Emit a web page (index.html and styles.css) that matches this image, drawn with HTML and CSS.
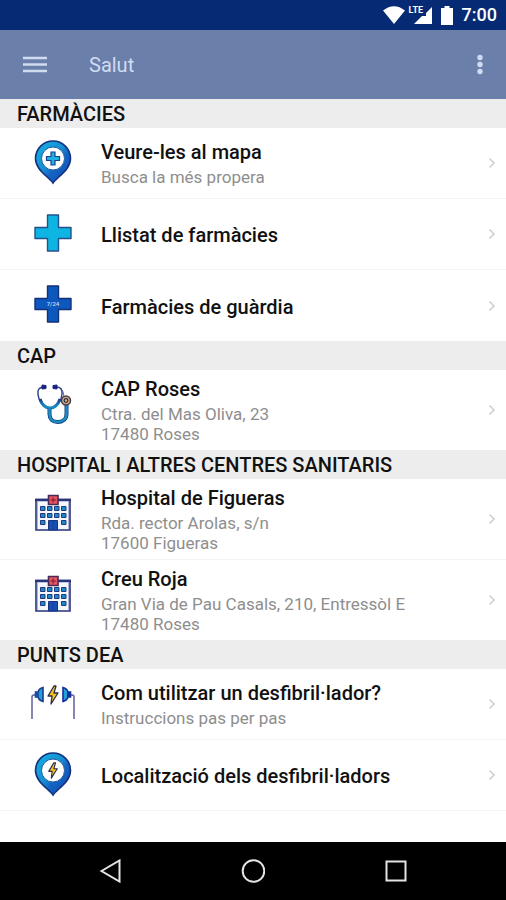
FILE: index.html
```html
<!DOCTYPE html>
<html lang="ca">
<head>
<meta charset="utf-8">
<meta name="viewport" content="width=device-width, initial-scale=1">
<title>Salut</title>
<link rel="stylesheet" href="styles.css">
</head>
<body>
<svg class="defs" aria-hidden="true">
  <defs>
    <linearGradient id="pin-fill" x1="0" y1="0" x2="1" y2="1">
      <stop offset="0" stop-color="#12b4e2"/>
      <stop offset=".45" stop-color="#168fd2"/>
      <stop offset=".6" stop-color="#1464c4"/>
      <stop offset="1" stop-color="#0c4ab2"/>
    </linearGradient>
    <linearGradient id="tube" x1="0" y1="0" x2="0" y2="1">
      <stop offset="0" stop-color="#1a2c86"/>
      <stop offset=".5" stop-color="#1778b4"/>
      <stop offset="1" stop-color="#1a8cc4"/>
    </linearGradient>
    <symbol id="pin" viewBox="0 0 48 48">
      <path d="M24 45C20 39 6.500 32 6.500 20.500a17.500 17.500 0 0 1 35 0C41.500 32 28 39 24 45Z" fill="url(#pin-fill)" stroke="#16317f" stroke-width="1.600"/>
      <circle cx="24" cy="20.500" r="11.500" fill="#fff" stroke="#1a5a9c" stroke-width="1"/>
    </symbol>
    <symbol id="cross" viewBox="0 0 48 48">
      <path d="M18.500 6h11v12.500H42v11H29.500V42h-11V29.500H6v-11h12.500Z" stroke-width="1.400" stroke-linejoin="round"/>
    </symbol>
    <symbol id="bolt" viewBox="0 0 12 20">
      <path d="M7 1 1 11h4l-1 8 7-11H7l2-7Z" fill="#f8c21c" stroke="#2b2b50" stroke-width="1.300" stroke-linejoin="round"/>
    </symbol>
    <symbol id="hospital" viewBox="0 0 48 48">
      <path d="M7 10.500h34V41H7Z" fill="#f6f7fc" stroke="#283579" stroke-width="1.600"/>
      <path d="M6 11h36" stroke="#283579" stroke-width="2.500"/>
      <path d="M8.500 12v28M39.500 12v28" stroke="#aeb6d8" stroke-width="1"/>
      <g fill="#1f87c4" stroke="#20387c" stroke-width="1">
        <path d="M11.500 17.500h4.500v4h-4.500ZM18.500 17.500H23v4h-4.500ZM25.500 17.500H30v4h-4.500ZM32.500 17.500H37v4h-4.500Z"/>
        <path d="M11.500 24.500h4.500v4h-4.500ZM18.500 24.500H23v4h-4.500ZM25.500 24.500H30v4h-4.500ZM32.500 24.500H37v4h-4.500Z"/>
        <path d="M11.500 31.500h4.500v4h-4.500ZM32.500 31.500H37v4h-4.500Z"/>
      </g>
      <path d="M19.500 31.500h9V41h-9Z" fill="#1551b4" stroke="#1a337c"/>
      <path d="M24 32v9" stroke="#1a3f96"/>
      <path d="M19.500 6.500h9.500v9h-9.500Z" fill="#e65560" stroke="#472a55" stroke-width="1.600"/>
      <path d="M24.200 8.500v5M21.700 11h5" stroke="#8e2940" stroke-width="1.500"/>
    </symbol>
    <symbol id="chevron" viewBox="0 0 8 12">
      <path d="m1.500 1.500 4.500 4.500-4.500 4.500" fill="none" stroke="#cfcfcf" stroke-width="1.600"/>
    </symbol>
  </defs>
</svg>

<div class="screen">
  <div class="status">
    <svg width="22" height="18" viewBox="0 0 22 18" aria-hidden="true"><path d="M0 4.500Q11-4 22 4.500L11 18Z" fill="#fff"/></svg>
    <span class="signal">
      <svg width="19" height="18" viewBox="0 0 19 18" aria-hidden="true"><path d="M19 1v17H1l8-8h4V7Z" fill="#fff"/></svg>
      <span class="lte">LTE</span>
    </span>
    <svg class="battery" width="12" height="19" viewBox="0 0 12 19" aria-hidden="true"><path d="M3.500 0h5v2H12v17H0V2h3.500Z" fill="#fff"/></svg>
    <span class="clock">7:00</span>
  </div>

  <header class="appbar">
    <button class="icon-button" type="button" aria-label="Menú">
      <svg width="24" height="18" viewBox="0 0 24 18"><path d="M0 2h24M0 8.500h24M0 15h24" stroke="#d0dcf0" stroke-width="2.500"/></svg>
    </button>
    <h1 class="title">Salut</h1>
    <button class="icon-button" type="button" aria-label="Més opcions">
      <svg width="6" height="22" viewBox="0 0 6 22"><g fill="#d0dcf0"><circle cx="3" cy="3.500" r="2.700"/><circle cx="3" cy="10.500" r="2.700"/><circle cx="3" cy="17.500" r="2.700"/></g></svg>
    </button>
  </header>

  <main class="content">
    <section>
      <h2 class="section-title">FARMÀCIES</h2>
      <a class="row" href="#mapa">
        <svg class="row-icon" viewBox="0 0 48 48" aria-hidden="true">
          <use href="#pin"/>
          <path d="M22 14h4v4.500h4.500v4H26V27h-4v-4.500h-4.500v-4H22Z" fill="#1eb0e0" stroke="#1a3f8c" stroke-width="1.200"/>
        </svg>
        <span class="text"><strong class="name">Veure-les al mapa</strong><span class="detail">Busca la més propera</span></span>
        <svg class="chevron" aria-hidden="true"><use href="#chevron"/></svg>
      </a>
      <a class="row" href="#llistat">
        <svg class="row-icon" viewBox="0 0 48 48" fill="#0eb4e2" stroke="#24518c" aria-hidden="true"><use href="#cross"/></svg>
        <span class="text"><strong class="name">Llistat de farmàcies</strong></span>
        <svg class="chevron" aria-hidden="true"><use href="#chevron"/></svg>
      </a>
      <a class="row" href="#guardia">
        <svg class="row-icon" viewBox="0 0 48 48" aria-hidden="true">
          <use href="#cross" fill="#0d58bd" stroke="#152f78"/>
          <text class="cross-label" x="24" y="26" text-anchor="middle">7/24</text>
        </svg>
        <span class="text"><strong class="name">Farmàcies de guàrdia</strong></span>
        <svg class="chevron" aria-hidden="true"><use href="#chevron"/></svg>
      </a>
    </section>

    <section>
      <h2 class="section-title">CAP</h2>
      <a class="row" href="#cap-roses">
        <svg class="row-icon" viewBox="0 0 48 48" fill="none" aria-hidden="true">
          <path d="M14 7c-4 .5-5.500 3-5 7 .5 5 3 10 7 13M28 7c4 .5 5.500 3 5 7-.5 5-3 10-7 13" stroke="#35438c" stroke-width="1.500"/>
          <path d="M11 19c2 6 5.500 9 10 9s8-3 10-9" stroke="url(#tube)" stroke-width="3"/>
          <path d="M20.500 28v6c0 5 3 8 8 8s9-3 9-8v-9" stroke="#163f7c" stroke-width="4"/>
          <path d="M20.500 28v6c0 5 3 8 8 8s9-3 9-8v-9" stroke="#1a8cc4" stroke-width="2.500"/>
          <path d="M33 10c2 2 1 6 3 9" stroke="#56639c"/>
          <path d="m13 5 4 .5v3L13 9ZM28 5l-4 .5v3L28 9Z" fill="#172283" stroke="#172283" stroke-width="1"/>
          <circle cx="37" cy="20.500" r="4.500" fill="#c2a684" stroke="#4b3e4a" stroke-width="1.500"/>
          <circle cx="37" cy="20.500" r="1.800" fill="#d8b06c" stroke="#333050" stroke-width="1.200"/>
        </svg>
        <span class="text"><strong class="name">CAP Roses</strong><span class="detail">Ctra. del Mas Oliva, 23<br>17480 Roses</span></span>
        <svg class="chevron" aria-hidden="true"><use href="#chevron"/></svg>
      </a>
    </section>

    <section>
      <h2 class="section-title">HOSPITAL I ALTRES CENTRES SANITARIS</h2>
      <a class="row" href="#hospital-figueres">
        <svg class="row-icon" viewBox="0 0 48 48" aria-hidden="true"><use href="#hospital"/></svg>
        <span class="text"><strong class="name">Hospital de Figueras</strong><span class="detail">Rda. rector Arolas, s/n<br>17600 Figueras</span></span>
        <svg class="chevron" aria-hidden="true"><use href="#chevron"/></svg>
      </a>
      <a class="row" href="#creu-roja">
        <svg class="row-icon" viewBox="0 0 48 48" aria-hidden="true"><use href="#hospital"/></svg>
        <span class="text"><strong class="name">Creu Roja</strong><span class="detail">Gran Via de Pau Casals, 210, Entressòl E<br>17480 Roses</span></span>
        <svg class="chevron" aria-hidden="true"><use href="#chevron"/></svg>
      </a>
    </section>

    <section>
      <h2 class="section-title">PUNTS DEA</h2>
      <a class="row" href="#instruccions">
        <svg class="row-icon" viewBox="0 0 48 48" fill="none" aria-hidden="true">
          <path d="M8 16H5q-2 0-2 2v22M40 16h3q2 0 2 2v22" stroke="#5f609c" stroke-width="1.500"/>
          <path d="M14 8.500v14q-4-1-5-4.500H6.500v-5H9Q10 9.500 14 8.500Z" fill="#20a0d8" stroke="#1c3a90" stroke-width="1.600"/>
          <path d="M6.500 13h3.500v5H6.500Z" fill="#1852a8"/>
          <path d="M34 8.500v14q4-1 5-4.500h2.500v-5H39Q38 9.500 34 8.500Z" fill="#20a0d8" stroke="#172e9a" stroke-width="1.600"/>
          <path d="M38 13h3.500v5H38Z" fill="#182ea0"/>
          <use href="#bolt" x="18" y="6" width="12" height="20"/>
        </svg>
        <span class="text"><strong class="name">Com utilitzar un desfibril·lador?</strong><span class="detail">Instruccions pas per pas</span></span>
        <svg class="chevron" aria-hidden="true"><use href="#chevron"/></svg>
      </a>
      <a class="row" href="#localitzacio">
        <svg class="row-icon" viewBox="0 0 48 48" aria-hidden="true"><use href="#pin"/><use href="#bolt" x="18" y="12" width="12" height="17"/></svg>
        <span class="text"><strong class="name">Localització dels desfibril·ladors</strong></span>
        <svg class="chevron" aria-hidden="true"><use href="#chevron"/></svg>
      </a>
    </section>
  </main>

  <nav class="navbar" aria-label="Sistema">
    <button class="icon-button" type="button" aria-label="Enrere"><svg width="24" height="24" viewBox="0 0 24 24"><path d="M3.500 12 21.500 1.500v21Z"/></svg></button>
    <button class="icon-button" type="button" aria-label="Inici"><svg width="24" height="24" viewBox="0 0 24 24"><circle cx="12.500" cy="12" r="10.800"/></svg></button>
    <button class="icon-button" type="button" aria-label="Recents"><svg width="24" height="24" viewBox="0 0 24 24"><path d="M2.500 2.500h19v19h-19Z"/></svg></button>
  </nav>
</div>
</body>
</html>
```
FILE: styles.css
```css
* {
  box-sizing: border-box;
}

body {
  margin: 0;
  font-family: Roboto, "Liberation Sans", sans-serif;
  background: #fff;
  color: #111;
}

svg {
  display: block;
}

.defs {
  position: absolute;
  width: 0;
  height: 0;
}

.screen {
  display: flex;
  flex-direction: column;
  min-height: 100vh;
}

.status {
  display: flex;
  align-items: center;
  justify-content: flex-end;
  height: 30px;
  padding: 0 9px;
  background: #062a74;
  color: #fff;
}

.signal {
  position: relative;
  padding-left: 8px;
}

.lte {
  position: absolute;
  top: -1px;
  left: 4px;
  font-size: 9px;
  line-height: 10px;
  font-weight: 700;
}

.battery {
  margin: 0 9px;
}

.clock {
  font-size: 18px;
  line-height: 32px;
  font-weight: 500;
}

.appbar {
  display: flex;
  align-items: center;
  height: 69px;
  padding: 0 23px;
  background: #6b7fab;
}

.icon-button {
  padding: 0;
  border: 0;
  background: none;
}

.title {
  flex: 1;
  margin: 0 0 0 42px;
  font-size: 20px;
  line-height: 24px;
  font-weight: 400;
  color: #d0dcf0;
}

.content {
  flex: 1;
}

.section-title {
  margin: 0;
  padding: 1px 17px 0;
  background: #ededed;
  font-size: 20px;
  line-height: 28px;
  font-weight: 500;
}

.row {
  display: flex;
  align-items: center;
  gap: 24px;
  min-height: 71px;
  padding: 0 10px 0 29px;
  border-bottom: 1px solid #f3f3f3;
  color: inherit;
  text-decoration: none;
}

section:not(:last-child) .row:last-child {
  border-bottom: 0;
}

.row-icon {
  flex: none;
  align-self: flex-start;
  width: 48px;
  height: 48px;
  margin-top: 10px;
}

.text {
  flex: 1;
  padding: 4px 0 6px;
}

.name,
.detail {
  display: block;
}

.name {
  font-size: 20px;
  line-height: 30px;
  font-weight: 500;
}

.name:only-child {
  padding-top: 4px;
}

.detail {
  font-size: 17px;
  line-height: 20px;
  color: #8e8e8e;
}

.chevron {
  flex: none;
  width: 8px;
  height: 12px;
}

.cross-label {
  font-size: 6px;
  font-weight: 500;
  fill: #c9dcf8;
}

.navbar {
  display: flex;
  justify-content: space-between;
  align-items: center;
  height: 58px;
  padding: 0 98px;
  background: #000;
}

.navbar svg {
  fill: none;
  stroke: #e4e4e4;
  stroke-width: 2;
}
```
